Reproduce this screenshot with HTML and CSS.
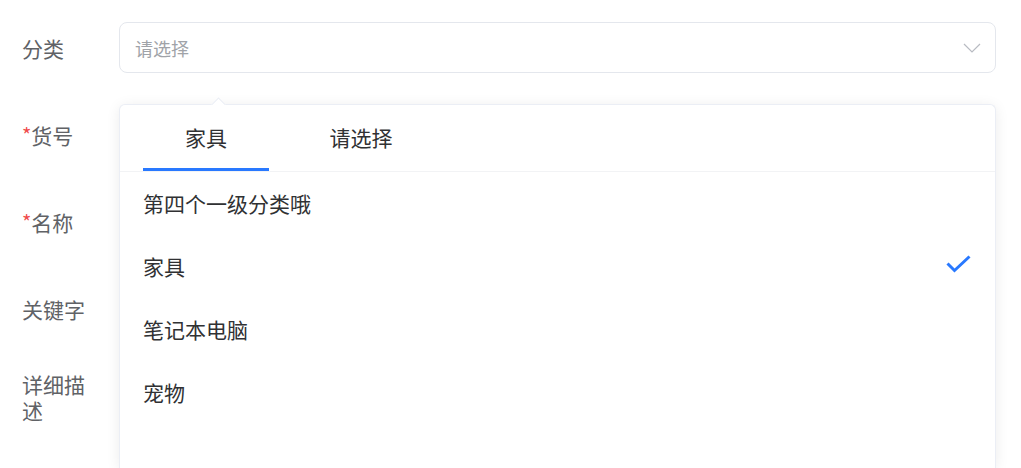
FILE: index.html
```html
<!DOCTYPE html>
<html lang="zh-CN">
<head>
    <meta charset="UTF-8">
    <meta name="viewport" content="width=device-width, initial-scale=1.0">
    <title>商品编辑</title>
    <link rel="stylesheet" href="styles.css">
</head>
<body>
    <div class="page">
        <form class="goods-form">
            <div class="form-item">
                <label class="form-label">分类</label>
                <div class="form-field">
                    <div class="select-box">
                        <span class="placeholder">请选择</span>
                        <svg class="chevron" width="18" height="10" viewBox="0 0 18 10">
                            <path d="M1 1 L9 9 L17 1" fill="none" stroke="#b8bbc2" stroke-width="1.2"/>
                        </svg>
                    </div>
                </div>
            </div>
            <div class="form-item">
                <label class="form-label"><span class="required">*</span>货号</label>
                <div class="form-field"><div class="input-box"></div></div>
            </div>
            <div class="form-item">
                <label class="form-label"><span class="required">*</span>名称</label>
                <div class="form-field"><div class="input-box"></div></div>
            </div>
            <div class="form-item">
                <label class="form-label">关键字</label>
                <div class="form-field"><div class="input-box"></div></div>
            </div>
            <div class="form-item">
                <label class="form-label">详细描述</label>
                <div class="form-field"><div class="input-box"></div></div>
            </div>
        </form>

        <!-- Cascader dropdown -->
        <div class="cascader">
            <div class="cascader-arrow"></div>
            <div class="cascader-tabs">
                <div class="tab active">家具</div>
                <div class="tab">请选择</div>
            </div>
            <ul class="cascader-list">
                <li class="option">第四个一级分类哦</li>
                <li class="option selected">
                    <span>家具</span>
                    <svg class="check" width="25" height="18" viewBox="0 0 25 18">
                        <path d="M1.5 8.5 L8.5 15.5 L23.5 1.5" fill="none" stroke="#2979ff" stroke-width="3"/>
                    </svg>
                </li>
                <li class="option">笔记本电脑</li>
                <li class="option">宠物</li>
            </ul>
        </div>
    </div>
</body>
</html>
```

FILE: styles.css
```css
* {
    margin: 0;
    padding: 0;
    box-sizing: border-box;
}

body {
    background: #fff;
    font-family: "Noto Sans CJK SC", "Noto Sans", sans-serif;
    overflow: hidden;
}

.page {
    position: relative;
    height: 100vh;
    overflow: hidden;
}

.goods-form {
    display: flex;
    flex-direction: column;
    gap: 36px;
    padding: 22px 25px 0 22px;
}

.form-item {
    display: flex;
    align-items: center;
    min-height: 51px;
}

.form-label {
    width: 97px;
    padding: 1px 28px 0 0;
    font-size: 21px;
    line-height: 26px;
    color: #606266;
}

.required {
    color: #f04b4b;
    font-size: 20px;
    position: relative;
    top: -1px;
}

.form-field {
    flex: 1;
}

.select-box {
    height: 51px;
    border: 1px solid #e4e7ed;
    border-radius: 8px;
    padding: 0 14px 0 15px;
    display: flex;
    align-items: center;
    justify-content: space-between;
}

.placeholder {
    font-size: 18px;
    color: #a0a3a8;
}

.input-box {
    height: 51px;
    border: 1px solid #e4e7ed;
    border-radius: 8px;
}

.cascader {
    position: absolute;
    left: 119px;
    top: 104px;
    bottom: 0;
    width: 877px;
    background: #fff;
    border: 1px solid #ebeef5;
    border-bottom: none;
    border-radius: 6px 6px 0 0;
    box-shadow: 0 2px 14px rgba(0, 0, 0, 0.08);
}

.cascader-arrow {
    position: absolute;
    left: 90px;
    top: -8px;
    width: 16px;
    height: 8px;
    overflow: hidden;
}

.cascader-arrow::after {
    content: "";
    position: absolute;
    left: 2px;
    top: 3px;
    width: 11px;
    height: 11px;
    background: #fff;
    border: 1px solid #ebeef5;
    transform: rotate(45deg);
}

.cascader-tabs {
    display: flex;
    gap: 29px;
    padding-left: 23px;
    height: 67px;
    border-bottom: 1px solid #f2f3f5;
}

.tab {
    width: 126px;
    display: flex;
    align-items: center;
    justify-content: center;
    font-size: 21px;
    color: #303133;
    border-bottom: 3px solid transparent;
}

.tab.active {
    border-bottom-color: #2979ff;
}

.cascader-list {
    list-style: none;
    margin-top: -1px;
}

.option {
    height: 63px;
    padding: 0 24px 0 23px;
    display: flex;
    align-items: center;
    justify-content: space-between;
    font-size: 21px;
    color: #303133;
}

.check {
    margin-top: -3px;
}
```
